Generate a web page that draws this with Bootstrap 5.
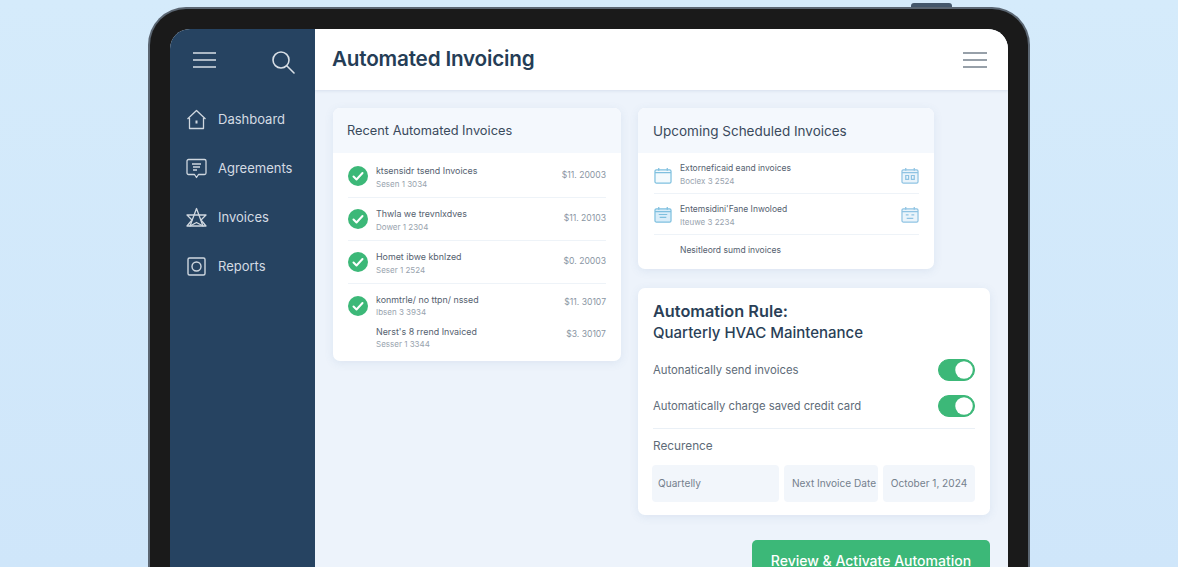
<!DOCTYPE html>
<html lang="en">
<head>
<meta charset="utf-8">
<title>Automated Invoicing</title>
<link rel="stylesheet" href="https://cdn.jsdelivr.net/npm/bootstrap@5.3.0/dist/css/bootstrap.min.css">
<style>
html,body{height:567px;overflow:hidden}
body{background:linear-gradient(180deg,#d5ebfb 0%,#cfe6fa 100%);font-family:Inter,"Liberation Sans",sans-serif;color:#2b3d52;padding:7px 0 0 148px}
.tablet-shell{width:882px;height:600px;background:#1a1a1a;border:2px solid #5b6672;border-bottom:0;border-radius:38px 38px 0 0;padding:20px 20px 0;position:relative}
.tablet-btn{position:absolute;top:-6px;right:76px;width:41px;height:4px;background:#44576b;border-radius:3px 3px 0 0}
.tablet-screen{height:100%;border-radius:20px 20px 0 0;overflow:hidden;background:#edf3fb}
.side-rail{width:145px;flex:none;background:#264361;color:#d4dbe3}
.rail-top{padding:21px 20px 0 23px;height:66px}
.rail-link{display:flex;align-items:center;gap:11px;padding-left:16px;height:49px;font-size:13px;color:#d4dbe3;text-decoration:none}
.top-head{height:61px;background:#fff;padding:0 21px 0 17px;box-shadow:0 1px 3px rgba(60,90,130,.12)}
.top-title{font-size:20.700px;font-weight:600;color:#253d56;margin:0;letter-spacing:-.2px}
.board{padding:18px 18px 0 18px;gap:17px}
.col-left{width:288px;flex:none}
.col-right{width:352px;flex:none;gap:19px}
.sheet{border:0;border-radius:7px;box-shadow:0 2px 10px rgba(70,110,160,.1);background:#fff}
.sheet .card-header{height:45px;flex:none;background:#f4f8fd;border:0;padding:1px 15px 0;display:flex;align-items:center;font-size:13.5px;color:#3a4a5c;border-radius:7px 7px 0 0}
.sheet .head-tight{font-size:12.8px;padding-left:14px}
.sheet-up{width:296px;height:161px}
.inv-list{padding:2px 0 10px}
.inv-row{border:0;border-bottom:1px solid #eef3f8;padding:0;margin:0 15px;display:flex;align-items:center;height:43px;background:transparent}
.inv-row.no-line{border-bottom:0}
.inv-row.short{height:24px}
.inv-ic{width:20px;flex:none;margin-right:8px}
.inv-name{font-size:8.9px;line-height:13px;color:#55616f}
.inv-sub{font-size:8px;line-height:13px;color:#98a3ae}
.inv-amt{font-size:8.6px;color:#8a96a3;margin-left:auto;margin-bottom:2px}
.txt-low{padding-top:3px}
.txt-low .inv-name{margin-bottom:1px}
.txt-up{margin-top:-2px}
.amt-four{margin-bottom:6px}
.amt-five{margin-bottom:10px}
.sched-row{height:41px;margin:0 15px 0 16px}
.sched-row .inv-name{font-size:8.5px}
.sched-drop{padding-top:4px}
.ic-lift{margin-bottom:4px}
.sched-row .name-lift{margin-bottom:10px}
.sched-ic{width:18px;flex:none;margin-right:8px}
.sheet-rule{height:227px;padding:13px 15px 0}
.rule-title{font-size:16.300px;line-height:21px;font-weight:600;color:#2a3f57;margin:0 0 9px}
.rule-title span{display:block;font-size:15px;font-weight:500}
.opt-row{height:36px;font-size:11.300px;color:#5e6b78}
.opt-row .form-check-input{width:37px;height:22px;margin:0;background-color:#3cb878;border-color:#3cb878;float:none}
.opt-row .form-switch .form-check-input:checked{--bs-form-switch-bg:url("data:image/svg+xml,%3csvg xmlns='http://www.w3.org/2000/svg' viewBox='-4 -4 8 8'%3e%3ccircle r='3.500' fill='%23fff'/%3e%3c/svg%3e")}
.opt-switch{padding:0;margin:0;min-height:0;display:flex}
.rule-sep{border-top:1px solid #eaf0f6;margin:4px 0 0}
.rec-label{font-size:11.800px;color:#5e6b78;margin:9px 0 9px}
.rec-line{margin-left:-1px}
.rec-cell{height:37px;background:#f2f6fb;border-radius:4px;font-size:10.100px;color:#75818e;display:flex;align-items:center;justify-content:center;white-space:nowrap}
.rec-a{width:127px;justify-content:flex-start;padding-left:6px;margin-right:5px}
.rec-b{width:94px;margin-right:5px;padding-left:6px}
.rec-c{width:92px}
.go-btn{width:238px;height:42px;margin-top:6px;flex:none;background:#3cb878;border:0;border-radius:5px;color:#fff;font-size:14px;font-weight:500;align-self:flex-end;padding:0;display:block;line-height:12px}
</style>
</head>
<body>
<div class="tablet-shell">
  <div class="tablet-btn"></div>
  <div class="tablet-screen d-flex">
    <aside class="side-rail">
      <div class="rail-top d-flex justify-content-between align-items-start">
        <svg width="24" height="20" viewBox="0 0 24 20" fill="none" stroke="#d8dfe6" stroke-width="1.600"><path d="M0 3h23M0 10h23M0 17h23"/></svg>
        <svg class="search-glass" width="24" height="24" viewBox="0 0 24 24" fill="none" stroke="#d8dfe6" stroke-width="1.600" stroke-linecap="round"><circle cx="10" cy="10" r="8"/><path d="M16 16l7 7"/></svg>
      </div>
      <nav>
        <a class="rail-link" href="#">
          <svg width="21" height="21" viewBox="0 0 21 21" fill="none" stroke="#cfd7df" stroke-width="1.300" stroke-linejoin="round"><path d="M1.500 10 10.500 1.500 19.500 10M3.500 9v10.500h14V9"/><path d="M10.500 11.500v3" stroke-width="2"/></svg>
          <span>Dashboard</span>
        </a>
        <a class="rail-link" href="#">
          <svg width="21" height="22" viewBox="0 0 21 22" fill="none" stroke="#cfd7df" stroke-width="1.300" stroke-linejoin="round"><path d="M2.500 1.500h16a1.500 1.500 0 0 1 1.500 1.500v12a1.500 1.500 0 0 1-1.500 1.500h-6l-2 3-2-3h-6a1.500 1.500 0 0 1-1.500-1.500v-12a1.500 1.500 0 0 1 1.500-1.500z"/><path d="M6 6h9M7 9h7M7 12h4"/></svg>
          <span>Agreements</span>
        </a>
        <a class="rail-link" href="#">
          <svg width="21" height="22" viewBox="0 0 21 22" fill="none" stroke="#cfd7df" stroke-width="1.300" stroke-linejoin="round"><path d="M10.500 1.500 4 19l6.500-3.500L17 19z"/><path d="M1 8h19L15 13l5 6H1l5-6z"/></svg>
          <span>Invoices</span>
        </a>
        <a class="rail-link" href="#">
          <svg width="21" height="21" viewBox="0 0 21 21" fill="none" stroke="#cfd7df" stroke-width="1.400"><rect x="2" y="2" width="17" height="17" rx="1.500"/><circle cx="10.500" cy="10.500" r="4.500"/></svg>
          <span>Reports</span>
        </a>
      </nav>
    </aside>
    <main class="flex-grow-1">
      <header class="top-head d-flex justify-content-between align-items-center">
        <h1 class="top-title">Automated Invoicing</h1>
        <svg width="24" height="18" viewBox="0 0 24 18" fill="none" stroke="#76818d" stroke-width="1.600"><path d="M0 2h24M0 9h24M0 16h24"/></svg>
      </header>
      <div class="board d-flex">
        <div class="col-left">
          <section class="card sheet">
            <div class="card-header head-tight">Recent Automated Invoices</div>
            <ul class="list-group list-group-flush inv-list">
              <li class="list-group-item inv-row">
                <svg class="inv-ic" width="20" height="20" viewBox="0 0 20 20"><circle cx="10" cy="10" r="10" fill="#3cb878"/><path d="M5.500 10.500l3 3 6-6.500" fill="none" stroke="#fff" stroke-width="2" stroke-linecap="round" stroke-linejoin="round"/></svg>
                <div class="txt-low"><div class="inv-name">ktsensidr tsend Invoices</div><div class="inv-sub">Sesen 1 3034</div></div>
                <div class="inv-amt">$11. 20003</div>
              </li>
              <li class="list-group-item inv-row">
                <svg class="inv-ic" width="20" height="20" viewBox="0 0 20 20"><circle cx="10" cy="10" r="10" fill="#3cb878"/><path d="M5.500 10.500l3 3 6-6.500" fill="none" stroke="#fff" stroke-width="2" stroke-linecap="round" stroke-linejoin="round"/></svg>
                <div class="txt-low"><div class="inv-name">Thwla we trevnlxdves</div><div class="inv-sub">Dower 1 2304</div></div>
                <div class="inv-amt">$11. 20103</div>
              </li>
              <li class="list-group-item inv-row">
                <svg class="inv-ic" width="20" height="20" viewBox="0 0 20 20"><circle cx="10" cy="10" r="10" fill="#3cb878"/><path d="M5.500 10.500l3 3 6-6.500" fill="none" stroke="#fff" stroke-width="2" stroke-linecap="round" stroke-linejoin="round"/></svg>
                <div class="txt-low"><div class="inv-name">Homet ibwe kbnlzed</div><div class="inv-sub">Seser 1 2524</div></div>
                <div class="inv-amt">$0. 20003</div>
              </li>
              <li class="list-group-item inv-row no-line">
                <svg class="inv-ic" width="20" height="20" viewBox="0 0 20 20"><circle cx="10" cy="10" r="10" fill="#3cb878"/><path d="M5.500 10.500l3 3 6-6.500" fill="none" stroke="#fff" stroke-width="2" stroke-linecap="round" stroke-linejoin="round"/></svg>
                <div><div class="inv-name">konmtrle/ no ttpn/ nssed</div><div class="inv-sub">Ibsen 3 3934</div></div>
                <div class="inv-amt amt-four">$11. 30107</div>
              </li>
              <li class="list-group-item inv-row no-line short">
                <span class="inv-ic"></span>
                <div class="txt-up"><div class="inv-name">Nerst's 8 rrend Invaiced</div><div class="inv-sub">Sesser 1 3344</div></div>
                <div class="inv-amt amt-five">$3. 30107</div>
              </li>
            </ul>
          </section>
        </div>
        <div class="col-right d-flex flex-column">
          <section class="card sheet sheet-up">
            <div class="card-header">Upcoming Scheduled Invoices</div>
            <ul class="list-group list-group-flush">
              <li class="list-group-item inv-row sched-row sched-drop">
                <svg class="sched-ic" width="18" height="17" viewBox="0 0 19 18" fill="none" stroke="#7fc0df" stroke-width="1.300"><rect x="1" y="3" width="17" height="14" rx="1.500" fill="#f3fafd"/><path d="M1 6h17M5 1v3M14 1v3"/></svg>
                <div><div class="inv-name">Extorneficaid eand invoices</div><div class="inv-sub">Boclex 3 2524</div></div>
                <svg class="ms-auto" width="18" height="17" viewBox="0 0 19 18" fill="none" stroke="#8fc3e3" stroke-width="1.300"><rect x="1" y="3" width="17" height="14" rx="1.500" fill="#eaf4fb"/><path d="M1 6h17M5 1v3M14 1v3M5 9h3v4H5zM11 9h3v4h-3z"/></svg>
              </li>
              <li class="list-group-item inv-row sched-row sched-drop">
                <svg class="sched-ic ic-lift" width="18" height="17" viewBox="0 0 19 18" fill="none" stroke="#7fc0df" stroke-width="1.300"><rect x="1" y="3" width="17" height="14" rx="1.500" fill="#d9edf9"/><path d="M1 6h17M5 1v3M14 1v3M5 9h9M6 12h7"/></svg>
                <div><div class="inv-name">Entemsidini'Fane Inwoloed</div><div class="inv-sub">Iteuwe 3 2234</div></div>
                <svg class="ms-auto ic-lift" width="18" height="17" viewBox="0 0 19 18" fill="none" stroke="#8fc3e3" stroke-width="1.300"><rect x="1" y="3" width="17" height="14" rx="1.500" fill="#eaf4fb"/><path d="M1 6h17M5 1v3M14 1v3M5 9.500h3M11 9.500h3M6 13h7"/></svg>
              </li>
              <li class="list-group-item inv-row sched-row no-line">
                <span class="sched-ic"></span>
                <div class="inv-name name-lift">Nesitleord sumd invoices</div>
              </li>
            </ul>
          </section>
          <section class="card sheet sheet-rule">
            <h2 class="rule-title">Automation Rule:<span>Quarterly HVAC Maintenance</span></h2>
            <div class="opt-row d-flex justify-content-between align-items-center">
              <span>Autonatically send invoices</span>
              <div class="form-check form-switch opt-switch"><input class="form-check-input" type="checkbox" role="switch" aria-label="Automatically send invoices" checked></div>
            </div>
            <div class="opt-row d-flex justify-content-between align-items-center">
              <span>Automatically charge saved credit card</span>
              <div class="form-check form-switch opt-switch"><input class="form-check-input" type="checkbox" role="switch" aria-label="Automatically charge saved credit card" checked></div>
            </div>
            <div class="rule-sep"></div>
            <div class="rec-label">Recurence</div>
            <div class="d-flex rec-line">
              <div class="rec-cell rec-a">Quartelly</div>
              <div class="rec-cell rec-b">Next Invoice Date</div>
              <div class="rec-cell rec-c">October 1, 2024</div>
            </div>
          </section>
          <button type="button" class="btn go-btn">Review &amp; Activate Automation</button>
        </div>
      </div>
    </main>
  </div>
</div>
</body>
</html>
